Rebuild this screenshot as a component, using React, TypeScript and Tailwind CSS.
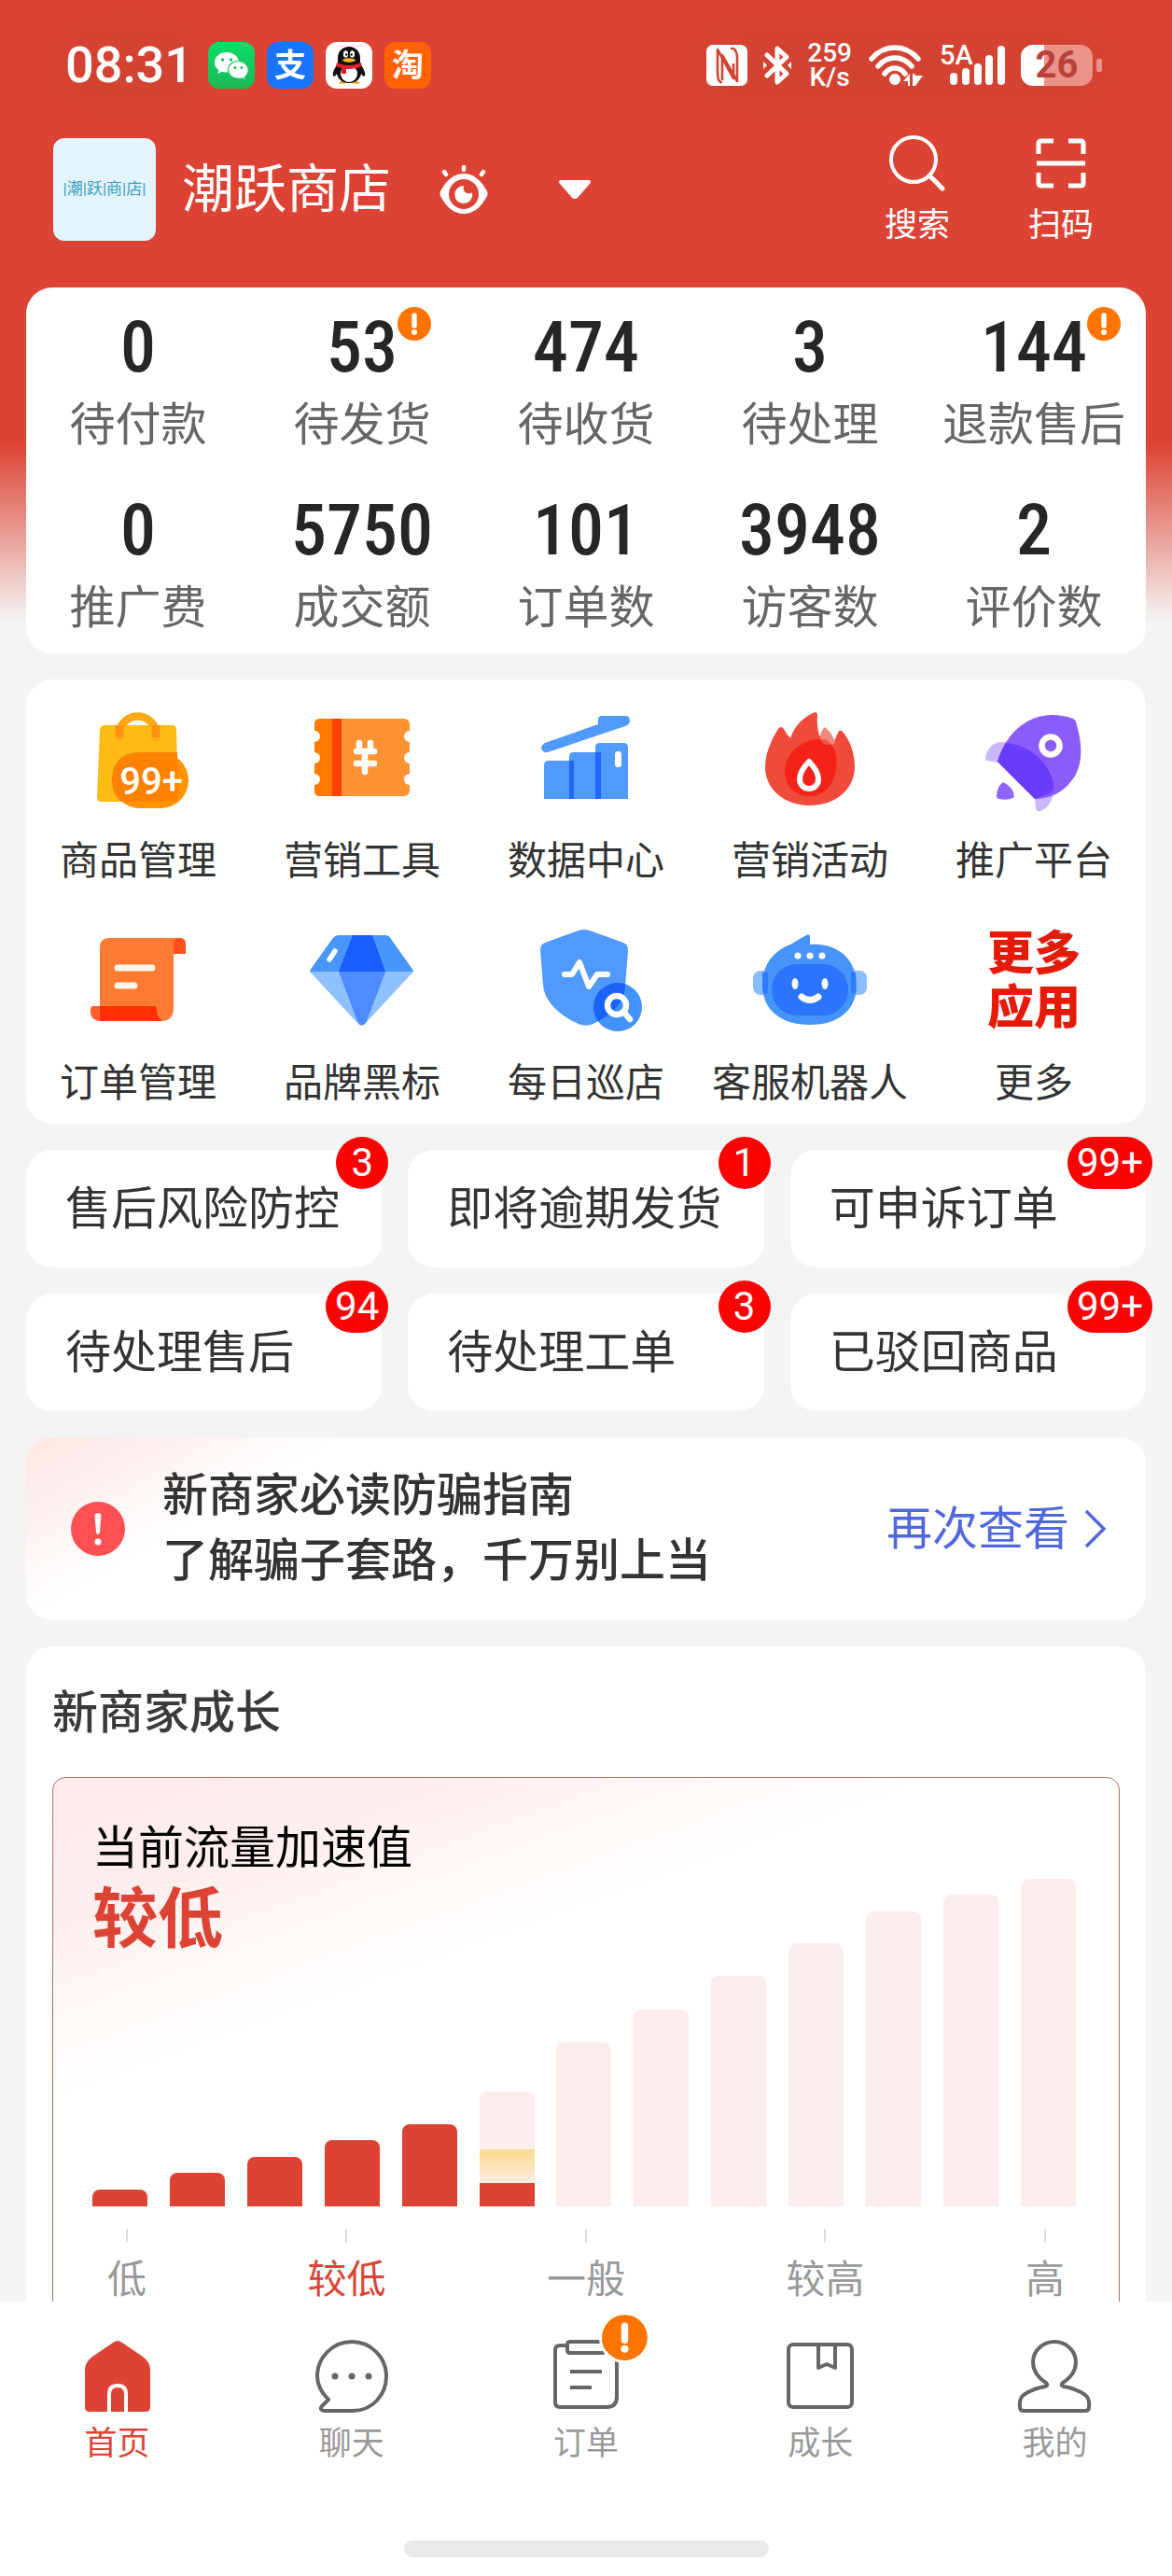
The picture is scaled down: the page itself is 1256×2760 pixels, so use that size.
import type { ReactNode } from "react";

const FONT = "font-['Roboto','Noto_Sans_CJK_SC',sans-serif]";

/* ---------- status bar ---------- */

function WechatIcon() {
  return (
    <svg viewBox="0 0 50 50" className="size-[50px]" aria-hidden="true">
      <defs>
        <linearGradient id="wechat-bg" x1="0" y1="0" x2="0" y2="1">
          <stop offset="0" stopColor="#0bdc67" />
          <stop offset="1" stopColor="#1fb857" />
        </linearGradient>
      </defs>
      <rect width="50" height="50" rx="12" fill="url(#wechat-bg)" />
      <path d="M20 11c-7.500 0-13 4.800-13 11 0 3.500 1.700 6.200 4.400 8.200L10.200 34l4.600-2.300c1.600.5 3.300.8 5.200.8 7.400 0 13-4.600 13-10.500S27.400 11 20 11z" fill="#fff" />
      <path d="M32.500 20.500C26 20.500 21.500 24.600 21.500 30s4.800 9.300 11 9.300c1.400 0 2.700-.2 3.900-.6l4 2.100-1-3.500c2.300-1.600 3.800-4.200 3.800-7.300 0-5.300-4.800-9.500-10.700-9.500z" fill="#fff" stroke="#1bc45d" strokeWidth="1.200" />
      <g fill="#1bc45d">
        <circle cx="15.500" cy="19" r="1.800" />
        <circle cx="24.500" cy="19" r="1.800" />
        <circle cx="29" cy="27.500" r="1.500" />
        <circle cx="36" cy="27.500" r="1.500" />
      </g>
    </svg>
  );
}

function QqIcon() {
  return (
    <svg viewBox="0 0 50 50" className="size-[50px]" aria-hidden="true">
      <rect width="50" height="50" rx="12" fill="#fff" />
      <path d="M15 43c3-3 17-3 21 0 2 2-3 2-6 1.500l-5-1-5 1c-3 .5-7 .5-5-1.500z" fill="#f5a623" />
      <path d="M25 5c-7 0-12 5-12 12v6C9 29 7 33 8 36c1 2 3 0 4-2 1 6 6 10 13 10s12-4 13-10c1 2 3 4 4 2 1-3-1-7-5-13v-6C37 10 32 5 25 5z" fill="#111" />
      <ellipse cx="25" cy="34" rx="9" ry="9" fill="#fff" />
      <ellipse cx="21.500" cy="13" rx="2.600" ry="3.800" fill="#fff" />
      <ellipse cx="28.500" cy="13" rx="2.600" ry="3.800" fill="#fff" />
      <circle cx="22.300" cy="13.500" r="1.200" fill="#111" />
      <circle cx="27.700" cy="13.500" r="1.200" fill="#111" />
      <ellipse cx="25" cy="19.500" rx="7" ry="2.200" fill="#f5b31c" />
      <path d="M12 22c8 4 18 4 26 0l1 4c-5 2-9 3-14 3h-3v5h-5v-6l-6-2z" fill="#e0232b" />
    </svg>
  );
}

function NfcIcon() {
  return (
    <svg viewBox="0 0 44 44" className="size-[44px]" aria-hidden="true">
      <rect width="44" height="44" rx="7" fill="#fff" />
      <g fill="none" stroke="#d14431" strokeWidth="2.600" strokeLinejoin="round">
        <path d="M17 40h-2c-3-2-3-6-3-10V5l17 31V20" />
        <path d="M26 4h3c3 2 4 6 4 10v25L17 11v27" />
      </g>
    </svg>
  );
}

function BluetoothIcon() {
  return (
    <svg viewBox="0 0 30 44" className="h-[44px] w-[30px]" aria-hidden="true">
      <path d="M4 11l21 20-10 9V4l10 9L4 33" fill="none" stroke="#fff" strokeWidth="5" strokeLinecap="round" strokeLinejoin="round" />
      <path d="M0 18l4 4-4 4zM30 18l-4 4 4 4z" fill="#fff" />
    </svg>
  );
}

function WifiIcon() {
  return (
    <svg viewBox="0 0 60 46" className="h-[46px] w-[60px]" aria-hidden="true">
      <g fill="none" stroke="#fff" strokeWidth="5.500" strokeLinecap="round">
        <path d="M4 16C18 0 40 0 54 16" />
        <path d="M11 24c10-12 26-12 36 0" />
        <path d="M18 32c6-8 16-8 22 0" />
      </g>
      <circle cx="29" cy="38" r="6" fill="#fff" />
      <path d="M38 40l7-8v13h-2v-5zM48 32h2l1 2h8l-8 11h-3z" fill="#fff" />
    </svg>
  );
}

function SignalIcon() {
  return (
    <svg viewBox="0 0 70 46" className="h-[46px] w-[70px] overflow-visible" role="img" aria-label="5A">
      <text x="0" y="22" fontSize="29" fontWeight="500" fill="#fff">5A</text>
      <g fill="#fff">
        <rect x="11" y="31" width="8" height="13" rx="4" />
        <rect x="24" y="26" width="8" height="18" rx="4" />
        <rect x="37" y="21" width="8" height="23" rx="4" />
        <rect x="49" y="12" width="8" height="32" rx="4" />
        <rect x="62" y="2" width="8" height="42" rx="4" />
      </g>
    </svg>
  );
}

function Battery() {
  return (
    <div className="flex items-center gap-1">
      <div className="flex h-11 w-[77px] items-center justify-center rounded-[13px] bg-linear-to-r from-white from-32% to-[#eb9289] to-32% text-[40px] font-bold text-[#b8423a]">
        26
      </div>
      <div className="h-[14px] w-[6px] rounded-[2px] bg-[#eb9289]" />
    </div>
  );
}

function StatusBar() {
  return (
    <div className="flex h-[140px] items-center justify-between pr-[75px] pl-[70px] text-white">
      <div className="flex items-center gap-4">
        <time className="rounded-full bg-[#8c4028]/10 text-[54px] leading-[60px] font-medium shadow-[0_0_40px_16px] shadow-[#8c4028]/10">
          08:31
        </time>
        <div className="flex gap-[13px]">
          <WechatIcon />
          <span className="flex size-[50px] items-center justify-center rounded-xl bg-[#1874fb] text-[34px] leading-none font-bold">
            支
          </span>
          <QqIcon />
          <span className="flex size-[50px] items-center justify-center rounded-xl bg-[#ff6104] text-[34px] leading-none font-bold">
            淘
          </span>
        </div>
      </div>
      <div className="flex items-center gap-[17px] rounded-full bg-[#8c4028]/10 shadow-[0_0_40px_16px] shadow-[#8c4028]/10">
        <NfcIcon />
        <BluetoothIcon />
        <p className="text-center text-[28px] leading-[26px] font-medium">
          259
          <br />
          K/s
        </p>
        <WifiIcon />
        <SignalIcon />
        <Battery />
      </div>
    </div>
  );
}

/* ---------- shop header ---------- */

function ShopHeader() {
  return (
    <header className="flex h-[168px] items-start justify-between pt-2 pr-[84px] pl-[57px] text-white">
      <div className="flex h-[110px] items-center">
        <div className="flex size-[110px] items-center justify-center rounded-xl bg-[#e3f4fd] text-[17px] whitespace-nowrap text-[#3c9fba]">
          |潮|跃|商|店|
        </div>
        <h1 className="ml-7 text-[56px] leading-none">潮跃商店</h1>
        <button type="button" aria-label="隐藏数据" className="ml-[52px]">
          <svg viewBox="0 0 52 52" className="size-[52px]">
            <path d="M1 28C8 15 16 9 26 9s18 6 25 19q1 3 0 5C44 46 36 52 26 52S8 46 1 33q-1-2 0-5z" fill="#fff" />
            <circle cx="26" cy="31" r="16" fill="#dd4334" />
            <path d="M26 22a9.500 9.500 0 1 0 9 7c-3 3-11 1-9-7z" fill="#fff" />
            <path d="M26 2v3M5 7l2 3M47 7l-2 3" stroke="#fff" strokeWidth="4.500" strokeLinecap="round" />
          </svg>
        </button>
        <button type="button" aria-label="切换店铺" className="ml-[75px]">
          <svg viewBox="0 0 36 22" className="h-[22px] w-[36px]">
            <path d="M3 3h30L20 18q-2 2-4 0z" fill="#fff" stroke="#fff" strokeWidth="4" strokeLinejoin="round" />
          </svg>
        </button>
      </div>
      <div className="flex gap-[84px] text-[35px] leading-10">
        <button type="button" className="flex w-[70px] flex-col items-center gap-5">
          <svg viewBox="0 0 60 54" className="h-[54px] w-[60px] overflow-visible" fill="none" stroke="#fff" strokeWidth="4">
            <circle cx="26" cy="23" r="24" />
            <path d="M43 40l14 14" strokeLinecap="round" strokeWidth="5" />
          </svg>
          搜索
        </button>
        <button type="button" className="flex w-[70px] flex-col items-center gap-5">
          <svg viewBox="0 0 54 54" className="size-[54px]" fill="none" stroke="#fff" strokeWidth="5">
            <path d="M3 17V6q0-3 3-3h13M35 3h13q3 0 3 3v11M51 37v11q0 3-3 3H35M19 51H6q-3 0-3-3V37M1 27h52" />
          </svg>
          扫码
        </button>
      </div>
    </header>
  );
}

/* ---------- numbers ---------- */

const STATS = [
  { label: "待付款", value: "0" },
  { label: "待发货", value: "53", alert: true },
  { label: "待收货", value: "474" },
  { label: "待处理", value: "3" },
  { label: "退款售后", value: "144", alert: true },
  { label: "推广费", value: "0" },
  { label: "成交额", value: "5750" },
  { label: "订单数", value: "101" },
  { label: "访客数", value: "3948" },
  { label: "评价数", value: "2" },
];

function AlertDot({ className }: { className: string }) {
  return (
    <svg viewBox="0 0 36 36" className={className} role="img" aria-label="提醒">
      <circle cx="18" cy="18" r="18" fill="#ff7400" />
      <path d="M18 9v11" stroke="#fff" strokeWidth="5.500" strokeLinecap="round" />
      <circle cx="18" cy="27" r="3" fill="#fff" />
    </svg>
  );
}

function StatsCard() {
  return (
    <section className="grid grid-cols-5 rounded-[28px] bg-white">
      {STATS.map((s) => (
        <a key={s.label} href="#" className="flex h-[196px] flex-col items-center pt-7">
          <span className="relative font-['Roboto_Condensed','Noto_Sans_CJK_SC',sans-serif] text-[76px] leading-[72px] font-medium text-[#262626]">
            {s.value}
            {s.alert && <AlertDot className="absolute -top-[7px] left-full size-9" />}
          </span>
          <span className="mt-[18px] text-[49px] leading-[60px] whitespace-nowrap text-[#666]">{s.label}</span>
        </a>
      ))}
    </section>
  );
}

/* ---------- app grid ---------- */

function Glyph({ children }: { children: ReactNode }) {
  return (
    <svg viewBox="0 0 120 120" className="size-[120px] overflow-visible" aria-hidden="true">
      {children}
    </svg>
  );
}

const APPS: { label: string; icon: ReactNode }[] = [
  {
    label: "商品管理",
    icon: (
      <Glyph>
        <path d="M25 24h71q5 0 5 5l2 72q0 5-5 5H21q-5 0-5-5l3-72q0-5 6-5z" fill="#fdbb14" />
        <path d="M40 37v-7a20 20 0 0 1 39 0v7" fill="none" stroke="#ffa818" strokeWidth="8.500" strokeLinecap="round" />
        <path d="M40 24v13M79 24v13" stroke="#ff9112" strokeWidth="8.500" />
        <rect x="32" y="53" width="82" height="60" rx="30" fill="#ff9400" />
        <path d="M62 53h40l1 48q0 5-5 5H42q-10-8-10-23 0-29 30-30z" fill="#ff8200" />
        <text x="74" y="98" textAnchor="middle" fontSize="40" fontWeight="500" fill="#fff">99+</text>
      </Glyph>
    ),
  },
  {
    label: "营销工具",
    icon: (
      <Glyph>
        <rect x="9" y="17" width="102" height="83" rx="6" fill="#ff9233" />
        <path d="M15 17h13v83H15q-6 0-6-6V23q0-6 6-6z" fill="#ff7a00" />
        <path d="M28 17h10v83H28z" fill="#ff4000" />
        <g fill="#fff">
          <circle cx="9" cy="36" r="6" />
          <circle cx="9" cy="59" r="6" />
          <circle cx="9" cy="82" r="6" />
          <circle cx="111" cy="36" r="6" />
          <circle cx="111" cy="59" r="6" />
          <circle cx="111" cy="82" r="6" />
        </g>
        <path d="M57 43v9M69 43v9M54 52h19M54 65h19M63 52v22" stroke="#fff" strokeWidth="6.500" strokeLinecap="round" />
      </Glyph>
    ),
  },
  {
    label: "数据中心",
    icon: (
      <Glyph>
        <path d="M73 18q0-4 4-4h25q5 0 5 5 0 4-5 6L19 53q-5 1-7-4 0-4 4-6l57-20z" fill="#4f9afc" />
        <path d="M15 103V67q0-5 5-5h27v41z" fill="#4f9afc" />
        <path d="M42 103V58q0-5 5-5h29v50z" fill="#4f9afc" />
        <path d="M70 103V48q0-5 5-5h25q5 0 5 5v55z" fill="#4f9afc" />
        <path d="M42 62h5v41h-5zM70 53h6v50h-6z" fill="#1f66fa" />
        <rect x="91" y="52" width="7" height="17" rx="3" fill="#fff" />
      </Glyph>
    ),
  },
  {
    label: "营销活动",
    icon: (
      <Glyph>
        <path d="M26 28C16 44 12 57 12 70c1 24 22 40 48 40s47-16 48-40c0-14-4-28-12-38q-4-5-6 0l-4 9-16-6q-3-10-2-22 0-4-5-2C49 18 43 27 39 38q-4-4-7-10-3-4-6 0z" fill="#ef4a3a" />
        <path d="M71 38q0-8 5-12 6 4 11 16-3 5-9 4-6-2-7-8z" fill="#f5897e" />
        <path d="M71 39q12-1 17 17c3 22-7 44-28 44-17 0-27-12-27-27 0-18 18-34 38-34z" fill="#f4231a" />
        <path d="M71 39q8 0 12 5-7 4-12-5z" fill="#f0594c" />
        <path d="M59 63c-5 5-10 12-10 19a10 10 0 0 0 20 0c0-7-5-14-10-19z" fill="none" stroke="#fff" strokeWidth="6" strokeLinejoin="round" />
      </Glyph>
    ),
  },
  {
    label: "推广平台",
    icon: (
      <Glyph>
        <path d="M8 59C10 46 20 39 32 43L21 64 11 62q-3 0-3-3z" fill="#cbb8fb" />
        <path d="M61 102l19-14c3 10-2 24-13 28q-5 1-5-4z" fill="#cbb8fb" />
        <path d="M21 63C28 38 48 14 78 13c10 0 19 2 24 4q3 1 4 7c7 24 6 46-6 60-9 12-23 19-39 19z" fill="#8a5dfb" />
        <path d="M21 63q4-12 9-20c24 2 44 18 51 42v9q-9 6-20 9z" fill="#6b3bfc" />
        <circle cx="78" cy="46" r="9.500" fill="none" stroke="#fff" strokeWidth="6.500" />
        <path d="M27 85q12 6 12 16-6 4-16 2-3 0-3-3 0-10 7-15z" fill="#9165fb" />
      </Glyph>
    ),
  },
  {
    label: "订单管理",
    icon: (
      <Glyph>
        <path d="M19 24q0-10 10-10h76q6 0 6 7v10H98v57q0 15-13 15H19z" fill="#ff7b33" />
        <path d="M98 31V20q0-6 6-6 7 0 7 7v10z" fill="#ff4f1c" />
        <path d="M12 87h7v16q-10-1-10-10v-3q0-3 3-3z" fill="#ff5f2b" />
        <path d="M19 87h58q3 0 3 4 0 8 6 12H19z" fill="#ff3001" />
        <path d="M38 46h37M38 65h18" stroke="#fff5ef" strokeWidth="7" strokeLinecap="round" />
      </Glyph>
    ),
  },
  {
    label: "品牌黑标",
    icon: (
      <Glyph>
        <path d="M35 11h50q4 0 6 4l22 31q2 3 2 4H4q0-1 2-4l22-31q3-4 7-4z" fill="#4896fb" />
        <path d="M50 11h21l14 39H35z" fill="#175dff" />
        <path d="M4 50h111L64 105q-5 5-9 0z" fill="#8fc0ff" />
        <path d="M35 50h50l-20 53q-5 9-10 0z" fill="#4c8cff" />
        <path d="M31 28l-6 9" stroke="#fff" strokeWidth="5.500" strokeLinecap="round" />
      </Glyph>
    ),
  },
  {
    label: "每日巡店",
    icon: (
      <Glyph>
        <defs>
          <clipPath id="shield">
            <path d="M52 6q6-2 12 0l36 13q5 2 5 8l-3 39c-1 22-22 34-34 40q-10 4-18-1C32 97 15 82 14 64l-3-37q0-6 5-8z" />
          </clipPath>
        </defs>
        <rect width="120" height="120" clipPath="url(#shield)" fill="#4f9afc" />
        <circle cx="94" cy="88" r="26" fill="#4391fb" />
        <circle cx="94" cy="88" r="26" fill="#1a62f8" clipPath="url(#shield)" />
        <path d="M37 53h8l8-13 10 26 9-13h11" fill="none" stroke="#fff" strokeWidth="6" strokeLinecap="round" strokeLinejoin="round" />
        <circle cx="93" cy="86" r="10" fill="none" stroke="#fff" strokeWidth="6.500" />
        <path d="M101 94l6 7" stroke="#fff" strokeWidth="6.500" strokeLinecap="round" />
      </Glyph>
    ),
  },
  {
    label: "客服机器人",
    icon: (
      <Glyph>
        <rect x="-1" y="49" width="20" height="26" rx="8" fill="#8bbcfd" />
        <rect x="101" y="49" width="20" height="26" rx="8" fill="#8bbcfd" />
        <path d="M60 13v8c32-2 50 18 50 43 0 28-20 43-50 43S9 92 9 64c0-22 12-36 30-43l17-10q4-2 4 2z" fill="#4594fb" />
        <path d="M9 51h6v22h-5q-1-4-1-9zM104 51h5v22h-5z" fill="#2b7bfa" />
        <rect x="19" y="42" width="82" height="55" rx="27" fill="#2a75fc" />
        <g fill="#fff">
          <circle cx="47" cy="33" r="3.500" />
          <circle cx="60" cy="33" r="3.500" />
          <circle cx="73" cy="33" r="3.500" />
          <ellipse cx="44" cy="63" rx="3.500" ry="6" />
          <ellipse cx="76" cy="63" rx="3.500" ry="6" />
        </g>
        <path d="M51 77q9 7 18 0" fill="none" stroke="#fff" strokeWidth="7" strokeLinecap="round" />
      </Glyph>
    ),
  },
  {
    label: "更多",
    icon: (
      <span className="flex size-[120px] flex-col items-center justify-center text-[50px] leading-[58px] font-black text-[#e51a08]">
        <span>更多</span>
        <span>应用</span>
      </span>
    ),
  },
];

function AppsCard() {
  return (
    <section className="grid grid-cols-5 rounded-[28px] bg-white">
      {APPS.map((app) => (
        <a key={app.label} href="#" className="flex h-[238px] flex-col items-center pt-[25px]">
          {app.icon}
          <span className="mt-[22px] text-[42px] leading-[56px] whitespace-nowrap text-[#333]">{app.label}</span>
        </a>
      ))}
    </section>
  );
}

/* ---------- todo shortcuts ---------- */

const TODOS = [
  { label: "售后风险防控", count: "3" },
  { label: "即将逾期发货", count: "1" },
  { label: "可申诉订单", count: "99+" },
  { label: "待处理售后", count: "94" },
  { label: "待处理工单", count: "3" },
  { label: "已驳回商品", count: "99+" },
];

function TodoGrid() {
  return (
    <section className="grid grid-cols-3 gap-7">
      {TODOS.map((t) => (
        <a
          key={t.label}
          href="#"
          className="relative flex h-[126px] items-center rounded-[28px] bg-white pl-[42px] text-[49px] leading-none whitespace-nowrap text-[#333]"
        >
          {t.label}
          <span className="absolute -top-[14px] -right-[7px] flex h-14 min-w-14 items-center justify-center rounded-full bg-[#fb0303] px-[10px] text-[42px] text-white">
            {t.count}
          </span>
        </a>
      ))}
    </section>
  );
}

function GuideBanner() {
  return (
    <section className="flex h-[196px] items-center rounded-[28px] bg-white bg-[linear-gradient(150deg,#fde6e5_0%,#fff_22%)] pr-[42px] pl-12">
      <svg viewBox="0 0 58 58" className="size-[58px] shrink-0" aria-hidden="true">
        <circle cx="29" cy="29" r="29" fill="#fe4f51" />
        <path d="M25.500 14q3.500-4 7 0l-1.500 19q-2 4-4 0z" fill="#fff" />
        <circle cx="29" cy="43" r="3.500" fill="#fff" />
      </svg>
      <p className="ml-10 flex-1 text-[49px] leading-[70px] font-medium text-[#333]">
        新商家必读防骗指南
        <br />
        了解骗子套路，千万别上当
      </p>
      <a href="#" className="flex items-center gap-4 text-[49px] leading-none text-[#5068dd]">
        再次查看
        <svg viewBox="0 0 24 42" className="h-[42px] w-6" fill="none" stroke="currentColor" strokeWidth="3.500">
          <path d="M2 2l19 19L2 40" />
        </svg>
      </a>
    </section>
  );
}

/* ---------- growth chart ---------- */

const BARS = [18, 36, 53, 71, 88, 123, 176, 211, 247, 282, 316, 334, 351];
const CURRENT = 5;
const LEVELS = ["低", "较低", "一般", "较高", "高"];

function GrowthCard() {
  return (
    <section className="rounded-t-[28px] bg-white px-7 pt-10">
      <h2 className="text-[49px] leading-[64px] font-medium text-[#3a3a3a]">新商家成长</h2>
      <div className="mt-9 rounded-[14px] border border-[#ab7468] bg-[linear-gradient(160deg,#feebeb_0%,#feeeee_14%,#fff9f7_25%,#fff_33%)] pt-11 pr-[46px] pb-16 pl-[42px]">
        <p className="text-[49px] leading-[64px] text-black">当前流量加速值</p>
        <p className="text-[70px] leading-[88px] font-bold text-[#dd4334]">较低</p>
        <div className="-mt-[88px] flex h-[351px] items-end justify-between">
          {BARS.map((h, i) => (
            <div
              key={h}
              className={`flex w-[59px] flex-col justify-end overflow-hidden rounded-t-lg ${i < CURRENT ? "bg-[#dd4334]" : "bg-[#fdeded]"}`}
              style={{ height: h }}
            >
              {i === CURRENT && (
                <>
                  <div className="h-9 bg-linear-to-b from-[#fcd989] to-[#fdeee2]" />
                  <div className="h-[25px] bg-[#dd4334]" />
                </>
              )}
            </div>
          ))}
        </div>
        <div className="mt-6 flex justify-between pr-3 pl-4 text-[42px] leading-[56px] text-[#999]">
          {LEVELS.map((level) => (
            <div key={level} className={level === "较低" ? "flex flex-col items-center text-[#dd4334]" : "flex flex-col items-center"}>
              <div className="mb-3 h-[15px] w-[2px] bg-[#ddd]" />
              {level}
            </div>
          ))}
        </div>
      </div>
    </section>
  );
}

/* ---------- tab bar ---------- */

const TABS: { label: string; icon: ReactNode; active?: boolean; alert?: boolean }[] = [
  {
    label: "首页",
    active: true,
    icon: (
      <>
        <path d="M35 4q5-4 10 0l22 15q8 6 8 14v40q0 5-5 5H10q-5 0-5-5V33q0-8 8-14z" fill="#dd4334" stroke="none" />
        <path d="M31 79V59q0-9 9-9t9 9v20" stroke="#fff" strokeWidth="4" />
      </>
    ),
  },
  {
    label: "聊天",
    icon: (
      <>
        <path d="M41 77H10q-5-1-2-5l7-7C7 57 3 49 3 40A37 37 0 0 1 40 3a37 37 0 0 1 37 37c0 20-15 37-36 37z" />
        <g fill="#666" stroke="none">
          <circle cx="22" cy="40" r="3.500" />
          <circle cx="40" cy="40" r="3.500" />
          <circle cx="58" cy="40" r="3.500" />
        </g>
      </>
    ),
  },
  {
    label: "订单",
    alert: true,
    icon: (
      <>
        <path d="M20 7h-8q-5 0-5 5v56q0 5 5 5h50q11 0 11-11V12q0-5-5-5h-8M23 3h34q3 0 3 3v6q0 3-3 3H23q-3 0-3-3V6q0-3 3-3z" />
        <path d="M23 35h34M23 52h23" />
      </>
    ),
  },
  {
    label: "成长",
    icon: (
      <>
        <rect x="6" y="6" width="68" height="67" rx="5" />
        <path d="M38 7v24l9-4 9 4V7" />
      </>
    ),
  },
  {
    label: "我的",
    icon: (
      <path d="M31 47C22 41 17 33 17 25a23 22 0 0 1 46 0c0 8-5 16-14 22q-3 3 1 4 13 2 23 9 5 4 4 13 0 4-4 4H7q-4 0-4-4-1-9 4-13 10-7 23-9 4-1 1-4z" />
    ),
  },
];

function TabBar() {
  return (
    <nav className="shrink-0 bg-white pb-5">
      <div className="grid grid-cols-5">
        {TABS.map((tab) => (
          <a
            key={tab.label}
            href="#"
            className={`flex flex-col items-center pt-10 text-[35px] leading-[44px] ${tab.active ? "text-[#dd4334]" : "text-[#999]"}`}
          >
            <span className="relative">
              <svg viewBox="0 0 80 80" className="size-20" fill="none" stroke="#666" strokeWidth="4" strokeLinejoin="round" aria-hidden="true">
                {tab.icon}
              </svg>
              {tab.alert && (
                <AlertDot className="absolute -top-[29px] left-[54px] size-[55px] rounded-full border-[3px] border-white" />
              )}
            </span>
            <span className="mt-[11px]">{tab.label}</span>
          </a>
        ))}
      </div>
      <div className="mx-auto mt-[81px] h-[18px] w-[391px] rounded-full bg-[#e9e9e9]" />
    </nav>
  );
}

export default function App() {
  return (
    <div className={`flex h-screen flex-col bg-[#f4f4f4] ${FONT}`}>
      <main className="min-h-0 flex-1 overflow-y-auto bg-[linear-gradient(180deg,#dd4334_0px,#dd4334_475px,#f4f4f4_665px)] [scrollbar-width:none]">
        <StatusBar />
        <ShopHeader />
        <div className="flex flex-col gap-7 px-7">
          <StatsCard />
          <AppsCard />
          <TodoGrid />
          <GuideBanner />
          <GrowthCard />
        </div>
      </main>
      <TabBar />
    </div>
  );
}
